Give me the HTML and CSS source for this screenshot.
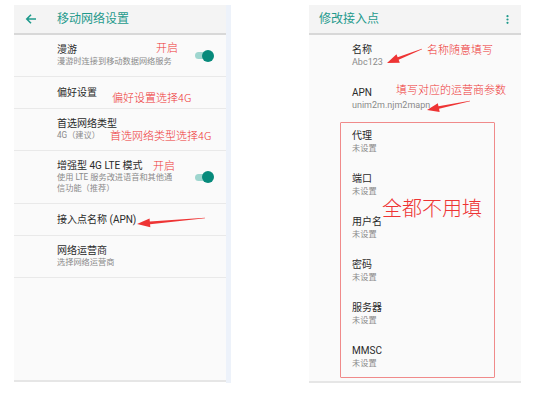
FILE: index.html
```html
<!DOCTYPE html>
<html lang="zh">
<head>
<meta charset="utf-8">
<link rel="stylesheet" href="styles.css">
</head>
<body>
<div class="page">
  <div class="left-wrap">
    <section class="panel panel-left">
      <header class="bar">
        <svg class="back" width="12" height="12" viewBox="0 0 12 12"><path d="M11 6H1.8M6 1.8L1.8 6L6 10.2" fill="none" stroke="#1f9a8c" stroke-width="1.6"/></svg>
        <span class="bar-title">移动网络设置</span>
      </header>
      <div class="row">
        <div class="text"><div class="t">漫游</div><div class="s">漫游时连接到移动数据网络服务</div></div>
        <span class="switch"></span>
      </div>
      <div class="row single">
        <div class="text"><div class="t">偏好设置</div></div>
      </div>
      <div class="row">
        <div class="text"><div class="t">首选网络类型</div><div class="s">4G（建议）</div></div>
      </div>
      <div class="row">
        <div class="text"><div class="t">增强型 4G LTE 模式</div><div class="s">使用 LTE 服务改进语音和其他通<br>信功能（推荐）</div></div>
        <span class="switch"></span>
      </div>
      <div class="row single">
        <div class="text"><div class="t">接入点名称 (APN)</div></div>
      </div>
      <div class="row">
        <div class="text"><div class="t">网络运营商</div><div class="s">选择网络运营商</div></div>
      </div>
    </section>
    <div class="strip"></div>
  </div>

  <section class="panel panel-right">
    <header class="bar bar-right">
      <span class="bar-title">修改接入点</span>
      <svg class="dots" width="3" height="9" viewBox="0 0 3 9"><circle cx="1.5" cy="1.2" r="1.1" fill="#1f9a8c"/><circle cx="1.5" cy="4.5" r="1.1" fill="#1f9a8c"/><circle cx="1.5" cy="7.8" r="1.1" fill="#1f9a8c"/></svg>
    </header>
    <div class="item"><div class="t">名称</div><div class="s lat">Abc123</div></div>
    <div class="item"><div class="t">APN</div><div class="s lat">unim2m.njm2mapn</div></div>
    <div class="item"><div class="t">代理</div><div class="s">未设置</div></div>
    <div class="item"><div class="t">端口</div><div class="s">未设置</div></div>
    <div class="item"><div class="t">用户名</div><div class="s">未设置</div></div>
    <div class="item"><div class="t">密码</div><div class="s">未设置</div></div>
    <div class="item"><div class="t">服务器</div><div class="s">未设置</div></div>
    <div class="item"><div class="t">MMSC</div><div class="s">未设置</div></div>
  </section>
</div>

<div class="note a1">开启</div>
<div class="note a2">偏好设置选择4G</div>
<div class="note a3">首选网络类型选择4G</div>
<div class="note a4">开启</div>
<div class="note a5">名称随意填写</div>
<div class="note a6">填写对应的运营商参数</div>
<div class="note big a7">全都不用填</div>
<div class="redbox"></div>

<svg class="arrows" width="543" height="408" viewBox="0 0 543 408">
  <polygon fill="#ee3434" points="204.97,217.70 149.84,221.57 149.55,218.38 137,224 150.35,227.34 150.06,224.15 205.03,218.30"/>
  <polygon fill="#ee3434" points="421.89,48.72 397.66,57.33 396.47,54.36 387,63 399.81,62.72 398.62,59.75 422.11,49.28"/>
  <polygon fill="#ee3434" points="469.94,100.71 438.48,106.27 437.83,103.14 427,110 439.67,111.95 439.02,108.81 470.06,101.29"/>
</svg>
</body>
</html>
```

FILE: styles.css
```css
* { box-sizing: border-box; }
html, body { margin: 0; padding: 0; background: #ffffff; }
body {
  width: 543px;
  height: 408px;
  position: relative;
  overflow: hidden;
  font-family: Roboto, "Noto Sans CJK SC", sans-serif;
}
.page {
  display: flex;
  align-items: flex-start;
  padding-top: 5px;
}
.left-wrap {
  display: flex;
  align-items: flex-start;
  margin-left: 14px;
}
.panel {
  width: 212px;
  background: #fafafa;
  border-bottom: 2px solid #e6e6e6;
}
.panel-left { height: 377px; }
.strip {
  width: 5px;
  height: 378px;
  background: #edf2fa;
}
.panel-right {
  margin-left: 78px;
  height: 378px;
}
.bar {
  height: 30px;
  background: #f4f4f4;
  border-bottom: 2px solid #d8d8d8;
  display: flex;
  align-items: center;
  padding-left: 11px;
}
.back { margin-right: 20px; flex: none; }
.bar-title {
  font-size: 12px;
  line-height: 14px;
  color: #1f9a8c;
  font-weight: 400;
}
.bar-right {
  justify-content: space-between;
  padding-left: 10px;
  padding-right: 12px;
}
.row {
  display: flex;
  align-items: center;
  padding: 9px 12px 9px 43px;
  border-bottom: 1px solid #e9e9e9;
}
.row.single { padding-top: 10px; }
.text { flex: 1; }
.t {
  font-size: 10px;
  line-height: 12px;
  color: #2a2a2a;
  font-weight: 400;
}
.s {
  font-size: 8.2px;
  line-height: 11px;
  color: #8a8a8a;
}
.s.lat { font-size: 9px; }
.switch {
  position: relative;
  width: 19px;
  height: 12px;
  flex: none;
}
.switch::before {
  content: "";
  position: absolute;
  left: 0;
  top: 2.5px;
  width: 17px;
  height: 7px;
  border-radius: 4px;
  background: #9fd6cf;
}
.switch::after {
  content: "";
  position: absolute;
  right: 0;
  top: 0;
  width: 12px;
  height: 12px;
  border-radius: 50%;
  background: #078a7b;
}
.item {
  height: 43px;
  padding: 8px 0 0 43px;
}
.item .t { line-height: 13px; }
.item .s { line-height: 13px; }

.note {
  position: absolute;
  font-family: "Noto Sans CJK SC", sans-serif;
  font-weight: 300;
  font-size: 11px;
  line-height: 11px;
  color: #ee3434;
  white-space: nowrap;
}
.note.big { font-size: 20px; line-height: 20px; }
.a1 { left: 156px; top: 42px; }
.a2 { left: 112px; top: 92px; }
.a3 { left: 110px; top: 130px; }
.a4 { left: 153px; top: 160px; }
.a5 { left: 427px; top: 44px; }
.a6 { left: 396px; top: 84px; }
.a7 { left: 382px; top: 198px; }
.redbox {
  position: absolute;
  left: 340px;
  top: 122px;
  width: 155px;
  height: 256px;
  border: 1.5px solid #f08a8a;
  border-radius: 1px;
}
.arrows {
  position: absolute;
  left: 0;
  top: 0;
  pointer-events: none;
}
```
